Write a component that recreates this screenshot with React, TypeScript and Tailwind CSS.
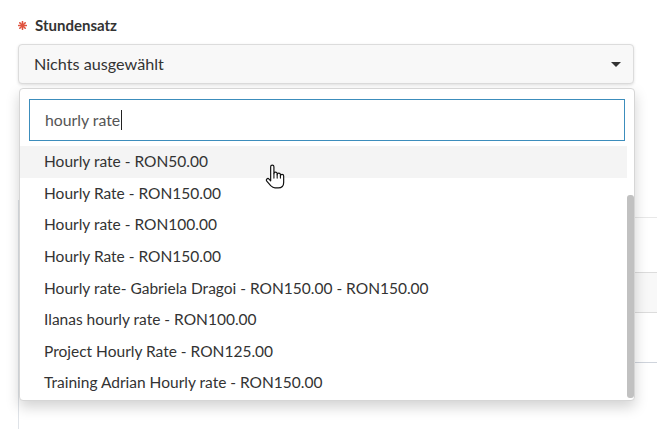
import { useState } from 'react'

const rates = [
  'Hourly rate - RON50.00',
  'Hourly Rate - RON150.00',
  'Hourly rate - RON100.00',
  'Hourly Rate - RON150.00',
  'Hourly rate- Gabriela Dragoi - RON150.00 - RON150.00',
  'Ilanas hourly rate - RON100.00',
  'Project Hourly Rate - RON125.00',
  'Training Adrian Hourly rate - RON150.00',
]

const RequiredMark = () => (
  <svg width="9" height="9" viewBox="0 0 10 10" className="mr-[8px]">
    <g stroke="#e0533f" strokeWidth="1.8" strokeLinecap="round">
      <line x1="5" y1="0.8" x2="5" y2="9.2" />
      <line x1="0.8" y1="5" x2="9.2" y2="5" />
      <line x1="2" y1="2" x2="8" y2="8" />
      <line x1="8" y1="2" x2="2" y2="8" />
    </g>
  </svg>
)

const HandCursor = () => (
  <svg width="26" height="26" viewBox="0 0 24 24" className="pointer-events-none absolute left-[262px] top-[164px]">
    <path
      d="M8 15.5V2.5a1.5 1.5 0 0 1 3 0V9a1.5 1.5 0 0 1 3 0v1a1.5 1.5 0 0 1 3 0v1a1.5 1.5 0 0 1 3 0v6c0 3-2 5-5 5h-3c-2 0-3-1-4-2l-3.6-4.2a1.4 1.4 0 0 1 2.1-1.9z"
      fill="#fff"
      stroke="#111"
      strokeWidth="1.1"
      strokeLinejoin="round"
    />
    <path d="M11 9v4M14 10v3M17 11v2" stroke="#111" strokeWidth="1" strokeLinecap="round" />
  </svg>
)

export default function App() {
  const [query] = useState('hourly rate')

  return (
    <div className="relative h-[429px] w-[657px] overflow-hidden bg-white font-['Lato','Liberation_Sans',sans-serif] text-[15.5px] text-[#333]">
      <div className="pl-[18px] pt-[15px]">
        <div className="flex h-[20px] items-center text-[15px] font-bold">
          <RequiredMark />
          <span>Stundensatz</span>
        </div>
        <button className="mt-[9px] flex h-[40px] w-[616px] items-center justify-between rounded-[4px] border border-[#dcdcdc] bg-[#f8f8f8] pl-[15px] pr-[12px] text-[16.2px] shadow-[0_1px_3px_rgba(0,0,0,0.12)]">
          <span>Nichts ausgewählt</span>
          <span className="h-0 w-0 border-x-[5px] border-t-[5px] border-x-transparent border-t-[#333]" />
        </button>

        {/* form content underneath the open menu */}
        <div className="mt-[116px] h-[240px] border-l border-[#dfe3e8]">
          <div className="h-[18px] border-b border-[#e8e8e8]" />
          <div className="h-[55px] border-b border-[#dcdcdc]" />
          <div className="h-[40px] border-b border-[#dcdcdc] bg-[#f8f8f8]" />
          <div className="h-[50px] border-b border-[#cfd4dc]" />
        </div>
      </div>

      <div className="absolute left-[19px] top-[88px] flex h-[313px] w-[616px] flex-col rounded-[4px] border border-[#d6d6d6] bg-white shadow-[0_6px_14px_rgba(0,0,0,0.18)]">
        <div className="px-[9px] pt-[10px]">
          <div className="flex h-[42px] w-full items-center border border-[#3c8dbc] bg-white px-[15px] text-[15.8px] text-[#555]">
            <span>{query}</span>
            <span className="ml-px h-[20px] w-px bg-[#222]" />
          </div>
        </div>
        <div className="mt-[5px] flex min-h-0 flex-1">
          <ul className="flex-1 overflow-hidden">
            {rates.map((r, i) => (
              <li
                key={i}
                className={`flex h-[31.6px] items-center whitespace-nowrap pl-[24px] ${i === 0 ? 'bg-[#f4f4f4]' : ''}`}
              >
                {r}
              </li>
            ))}
          </ul>
          <div className="w-[7px] pt-[49px] pb-[2px]">
            <div className="h-full rounded-[3px] bg-[#c1c1c1]" />
          </div>
        </div>
      </div>

      <HandCursor />
    </div>
  )
}
